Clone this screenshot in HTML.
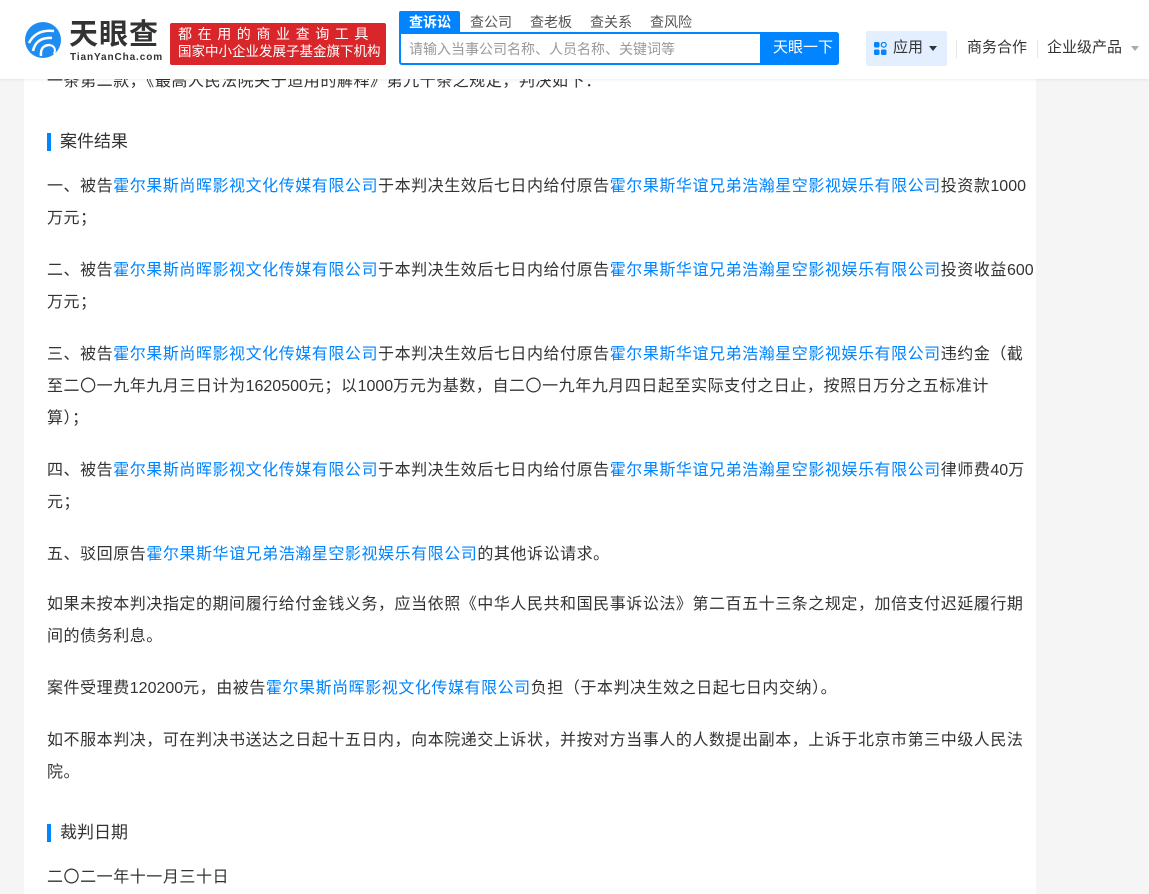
<!DOCTYPE html>
<html><head><meta charset="utf-8"><style>
*{margin:0;padding:0;box-sizing:border-box}
body{width:1149px;height:894px;overflow:hidden;background:#f5f5f5;font-family:"Liberation Sans","Noto Sans CJK SC",sans-serif;color:#333;position:relative}
.card{position:absolute;left:24px;top:0;width:1012px;height:894px;background:#fff}
.l{position:absolute;left:47px;font-size:16px;letter-spacing:0.55px;white-space:nowrap;line-height:20px;margin-top:2px}
.l a{color:#0084ff;text-decoration:none}
.l .n{letter-spacing:0}
.t{position:absolute;left:47px;font-size:17px;white-space:nowrap;line-height:20px;padding-left:13px;margin-top:1px}
.t:before{content:"";position:absolute;left:0;top:1px;width:4px;height:18px;background:#0084ff}
.hd{position:absolute;left:0;top:0;width:1149px;height:79px;background:#fff;box-shadow:0 1px 3px rgba(0,0,0,.08);z-index:5}
.hd *{position:absolute;white-space:nowrap}
</style></head><body>
<div class="card"></div>
<div class="l" style="top:70px">一条第二款，《最高人民法院关于适用的解释》第九十条之规定，判决如下：</div>
<div class="t" style="top:131px">案件结果</div>
<div class="l" style="top:175px">一、被告<a>霍尔果斯尚晖影视文化传媒有限公司</a>于本判决生效后七日内给付原告<a>霍尔果斯华谊兄弟浩瀚星空影视娱乐有限公司</a>投资款<span class="n">1000</span></div>
<div class="l" style="top:207px">万元；</div>
<div class="l" style="top:259px">二、被告<a>霍尔果斯尚晖影视文化传媒有限公司</a>于本判决生效后七日内给付原告<a>霍尔果斯华谊兄弟浩瀚星空影视娱乐有限公司</a>投资收益<span class="n">600</span></div>
<div class="l" style="top:291px">万元；</div>
<div class="l" style="top:343px">三、被告<a>霍尔果斯尚晖影视文化传媒有限公司</a>于本判决生效后七日内给付原告<a>霍尔果斯华谊兄弟浩瀚星空影视娱乐有限公司</a>违约金（截</div>
<div class="l" style="top:375px">至二〇一九年九月三日计为<span class="n">1620500</span>元；以<span class="n">1000</span>万元为基数，自二〇一九年九月四日起至实际支付之日止，按照日万分之五标准计</div>
<div class="l" style="top:407px">算）；</div>
<div class="l" style="top:459px">四、被告<a>霍尔果斯尚晖影视文化传媒有限公司</a>于本判决生效后七日内给付原告<a>霍尔果斯华谊兄弟浩瀚星空影视娱乐有限公司</a>律师费<span class="n">40</span>万</div>
<div class="l" style="top:491px">元；</div>
<div class="l" style="top:543px">五、驳回原告<a>霍尔果斯华谊兄弟浩瀚星空影视娱乐有限公司</a>的其他诉讼请求。</div>
<div class="l" style="top:593px">如果未按本判决指定的期间履行给付金钱义务，应当依照《中华人民共和国民事诉讼法》第二百五十三条之规定，加倍支付迟延履行期</div>
<div class="l" style="top:625px">间的债务利息。</div>
<div class="l" style="top:677px">案件受理费<span class="n">120200</span>元，由被告<a>霍尔果斯尚晖影视文化传媒有限公司</a>负担（于本判决生效之日起七日内交纳）。</div>
<div class="l" style="top:729px">如不服本判决，可在判决书送达之日起十五日内，向本院递交上诉状，并按对方当事人的人数提出副本，上诉于北京市第三中级人民法</div>
<div class="l" style="top:761px">院。</div>
<div class="t" style="top:822px">裁判日期</div>
<div class="l" style="top:866px">二〇二一年十一月三十日</div>

<div class="hd">
<svg style="left:24px;top:21px" width="38" height="38" viewBox="0 0 38 38"><circle cx="19" cy="19" r="18" fill="#1e8cf0"/><path d="M5 22 Q12 8 30 10" stroke="#fff" stroke-width="2.5" fill="none"/><path d="M9 30 Q12 16 28 17" stroke="#fff" stroke-width="2.5" fill="none"/><path d="M17 35 Q16 24 26 24" stroke="#fff" stroke-width="2.5" fill="none"/><path d="M26 24 Q33 26 30 33" stroke="#fff" stroke-width="2" fill="none"/></svg>
<div style="left:69px;top:19px;font-size:29px;font-weight:bold;color:#333;letter-spacing:1px;line-height:32px">天眼查</div>
<div style="left:70px;top:52px;font-size:10px;color:#333;letter-spacing:0.9px;font-weight:bold">TianYanCha.com</div>
<div style="left:170px;top:23px;width:216px;height:42px;background:#d8262b;border-radius:2px"></div>
<div style="left:178px;top:25px;font-size:14px;color:#fff;letter-spacing:5.6px;line-height:18px">都在用的商业查询工具</div>
<div style="left:178px;top:43px;font-size:13.5px;color:#fff;line-height:18px">国家中小企业发展子基金旗下机构</div>
<div style="left:399px;top:11px;width:61px;height:22px;background:#0084ff;border-radius:2px 2px 0 0"></div>
<div style="left:409px;top:12px;font-size:14px;color:#fff;line-height:20px;font-weight:bold">查诉讼</div>
<div style="left:470px;top:12px;font-size:14px;color:#555;line-height:20px">查公司</div>
<div style="left:530px;top:12px;font-size:14px;color:#555;line-height:20px">查老板</div>
<div style="left:590px;top:12px;font-size:14px;color:#555;line-height:20px">查关系</div>
<div style="left:650px;top:12px;font-size:14px;color:#555;line-height:20px">查风险</div>
<div style="left:399px;top:32px;width:440px;height:33px;border:2px solid #0084ff;border-radius:0 3px 3px 3px"></div>
<div style="left:409px;top:39px;font-size:14px;color:#999;line-height:20px">请输入当事公司名称、人员名称、关键词等</div>
<div style="left:760px;top:32px;width:79px;height:33px;background:#0084ff;border-radius:0 3px 3px 0"></div>
<div style="left:773px;top:38px;font-size:15px;color:#fff;line-height:20px">天眼一下</div>
<div style="left:866px;top:31px;width:81px;height:35px;background:#e3efff;border-radius:2px"></div>
<svg style="left:874px;top:42px" width="13" height="13" viewBox="0 0 13 13"><rect x="0" y="0" width="5.5" height="5.5" rx="1.5" fill="#0084ff"/><circle cx="9.75" cy="2.75" r="2.4" fill="none" stroke="#0084ff" stroke-width="1.3"/><rect x="0" y="7.5" width="5.5" height="5.5" rx="1.5" fill="#0084ff"/><rect x="7" y="7.5" width="5.5" height="5.5" rx="1.5" fill="#0084ff"/></svg>
<div style="left:893px;top:38px;font-size:15px;color:#333;line-height:20px">应用</div>
<div style="left:929px;top:46px;width:0;height:0;border-left:4px solid transparent;border-right:4px solid transparent;border-top:5px solid #333"></div>
<div style="left:956px;top:40px;width:1px;height:18px;background:#e5e5e5"></div>
<div style="left:967px;top:38px;font-size:15px;color:#333;line-height:20px">商务合作</div>
<div style="left:1037px;top:40px;width:1px;height:18px;background:#e5e5e5"></div>
<div style="left:1047px;top:38px;font-size:15px;color:#333;line-height:20px">企业级产品</div>
<div style="left:1131px;top:46px;width:0;height:0;border-left:4px solid transparent;border-right:4px solid transparent;border-top:5px solid #aaa"></div>
</div>
</body></html>
